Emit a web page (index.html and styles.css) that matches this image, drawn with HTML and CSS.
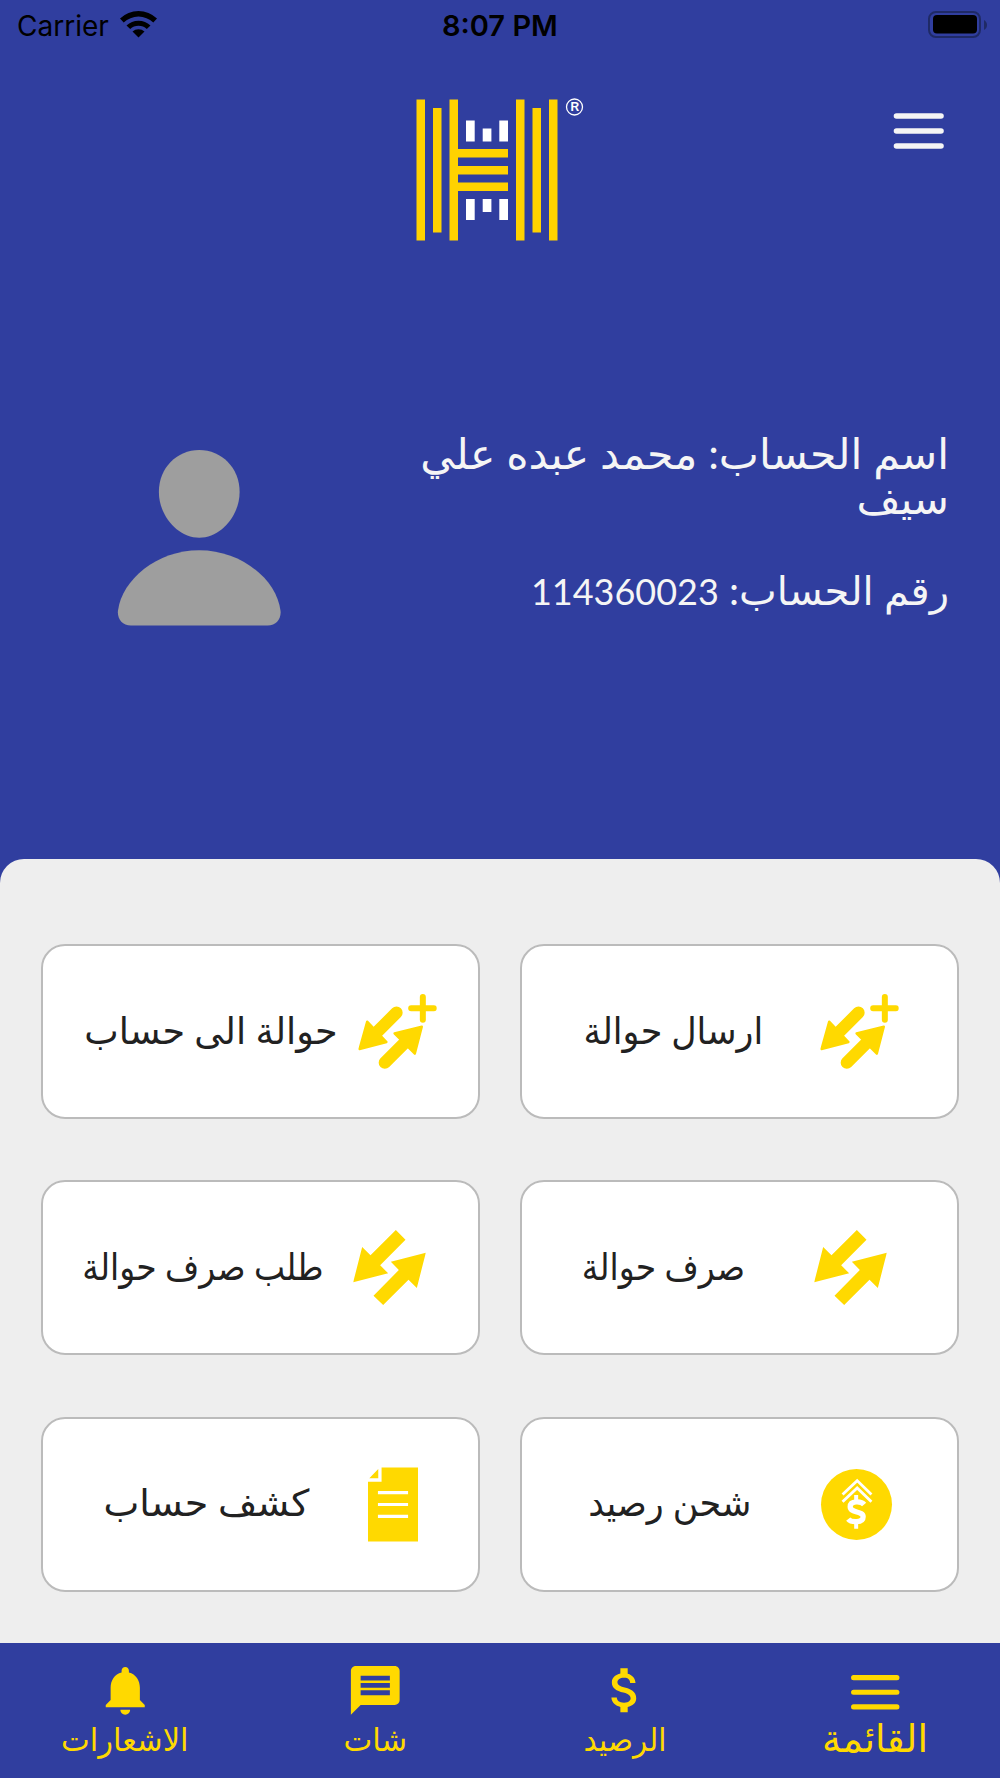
FILE: index.html
```
<!DOCTYPE html>
<html lang="ar" dir="rtl">
<head>
    <meta charset="UTF-8">
    <meta name="viewport" content="width=device-width, initial-scale=1.0">
    <title>الرئيسية</title>
    <link rel="stylesheet" href="styles.css">
</head>
<body>
    <div class="status-bar" dir="ltr">
        <div class="carrier">
            <span>Carrier</span>
            <svg class="wifi" viewBox="0 0 37 28">
                <path d="M18.500 27.500L12.500 21.500a9 9 0 0 1 12 0z"/>
                <path d="M6.500 15.500a17.500 17.500 0 0 1 24 0l-3.700 3.600a12 12 0 0 0 -16.600 0z"/>
                <path d="M0 8.500a26.500 26.500 0 0 1 37 0l-3.700 4a21.500 21.500 0 0 0 -29.600 0z"/>
            </svg>
        </div>
        <span class="time">8:07 PM</span>
        <svg class="battery" viewBox="0 0 60 28">
            <rect x="1" y="1" width="51" height="25" rx="7" fill="none" stroke="#1f2a66" stroke-width="2"/>
            <rect x="5" y="4" width="44" height="18.500" rx="4"/>
            <path d="M56 9c4 2 4 8 0 10z" fill="#1f2a66"/>
        </svg>
    </div>

    <header class="header">
        <svg class="logo" viewBox="0 0 170 144">
            <g fill="#ffd200">
                <rect x="0.500" y="1.500" width="8.500" height="141"/>
                <rect x="17" y="10" width="8.500" height="124.500"/>
                <rect x="33.500" y="1.500" width="8.500" height="141"/>
                <rect x="100" y="1.500" width="8.500" height="141"/>
                <rect x="116.500" y="10" width="8.500" height="124.500"/>
                <rect x="133" y="1.500" width="8.500" height="141"/>
                <rect x="42" y="51" width="50" height="8.500"/>
                <rect x="42" y="68" width="50" height="8.500"/>
                <rect x="42" y="84.500" width="50" height="8.500"/>
            </g>
            <g fill="#fff">
                <rect x="50" y="22.500" width="8.700" height="21"/>
                <rect x="66.700" y="30.500" width="8.700" height="13"/>
                <rect x="83.300" y="22.500" width="8.700" height="21"/>
                <rect x="50" y="101" width="8.700" height="21"/>
                <rect x="66.700" y="101" width="8.700" height="13"/>
                <rect x="83.300" y="101" width="8.700" height="21"/>
            </g>
            <circle cx="158.500" cy="9" r="8" fill="none" stroke="#fff" stroke-width="1.300"/>
            <text class="reg" x="158.900" y="13.200" text-anchor="middle">R</text>
        </svg>
        <svg class="menu-btn" viewBox="0 0 50 38">
            <path d="M2.500 4H47M2.500 19H47M2.500 34H47" stroke="#f5f5f5" stroke-width="5.600" stroke-linecap="round"/>
        </svg>
    </header>

    <section class="profile">
        <div class="account">
            <p class="account-name">اسم الحساب: محمد عبده علي سيف</p>
            <p class="account-number">رقم الحساب: <span class="digits">114360023</span></p>
        </div>
        <svg class="avatar" viewBox="0 0 163 176">
            <path d="M81.500 0C104 0 122 18 122 42C122 66 103 88 81.500 88C60 88 41 66 41 42C41 18 59 0 81.500 0z"/>
            <path d="M81.500 100.500C124 100.500 159 130 163 161C164 169 159 176 150 176H13C4 176 -1 169 0 161C4 130 39 100.500 81.500 100.500z"/>
        </svg>
    </section>

    <main class="panel">
        <a class="card send">
            <svg class="card-icon" viewBox="0 0 236 225"><use href="#transfer-plus"/></svg>
            <span class="label">ارسال حوالة</span>
        </a>
        <a class="card to-account">
            <svg class="card-icon" viewBox="0 0 236 225"><use href="#transfer-plus"/></svg>
            <span class="label">حوالة الى حساب</span>
        </a>
        <a class="card cash">
            <svg class="card-icon" viewBox="0 0 218 225"><use href="#transfer"/></svg>
            <span class="label">صرف حوالة</span>
        </a>
        <a class="card cash-request">
            <svg class="card-icon" viewBox="0 0 218 225"><use href="#transfer"/></svg>
            <span class="label">طلب صرف حوالة</span>
        </a>
        <a class="card topup">
            <svg class="card-icon" viewBox="0 0 214 214">
                <circle cx="107" cy="107" r="107" fill="#ffd900"/>
                <g fill="none" stroke="#fff">
                    <path d="M65 77L109 35L152 77M65 99L109 57L152 99" stroke-width="8.500"/>
                    <path d="M130 107C122 97 88 94 88 114C88 134 127 125 127 144C127 164 90 161 82 151" stroke-width="16"/>
                    <path d="M106 78V96M106 162V180" stroke-width="12"/>
                </g>
            </svg>
            <span class="label">شحن رصيد</span>
        </a>
        <a class="card statement">
            <svg class="card-icon" viewBox="0 0 151 224">
                <path d="M41 0H151V224H0V43H41zM31 5V33H4z" fill="#ffd900"/>
                <path d="M30 76H121M30 112H121M30 148H121" stroke="#fff" stroke-width="9.500"/>
            </svg>
            <span class="label">كشف حساب</span>
        </a>
    </main>

    <nav class="tabs">
        <a class="tab active">
            <svg class="tab-icon" viewBox="0 0 58 58">
                <path d="M7.500 16.500H50.500M7.500 31H50.500M7.500 45.500H50.500" stroke="#ffd900" stroke-width="5" stroke-linecap="round"/>
            </svg>
            <span class="label">القائمة</span>
        </a>
        <a class="tab balance">
            <svg class="tab-icon" viewBox="0 0 24 24">
                <path d="M11.800 10.900c-2.270-.59-3-1.200-3-2.150 0-1.090 1.010-1.850 2.700-1.850 1.780 0 2.440.85 2.500 2.100h2.210c-.07-1.720-1.120-3.300-3.210-3.810V3h-3v2.160c-1.940.42-3.500 1.680-3.500 3.610 0 2.310 1.910 3.460 4.700 4.130 2.500.6 3 1.480 3 2.410 0 .69-.49 1.790-2.700 1.790-2.060 0-2.870-.92-2.980-2.100h-2.200c.12 2.190 1.760 3.420 3.680 3.830V21h3v-2.150c1.950-.37 3.500-1.500 3.500-3.550 0-2.840-2.430-3.810-4.700-4.400z"/>
            </svg>
            <span class="label">الرصيد</span>
        </a>
        <a class="tab chat">
            <svg class="tab-icon" viewBox="0 0 24 24">
                <path d="M20 2H4c-1.100 0-1.990.9-1.990 2L2 22l4-4h14c1.100 0 2-.9 2-2V4c0-1.100-.9-2-2-2zm-2 12H6v-2h12v2zm0-3H6V9h12v2zm0-3H6V6h12v2z"/>
            </svg>
            <span class="label">شات</span>
        </a>
        <a class="tab alerts">
            <svg class="tab-icon" viewBox="0 0 24 24">
                <path d="M12 22c1.100 0 2-.9 2-2h-4c0 1.100.9 2 2 2zM18 16v-5c0-3.070-1.640-5.640-4.500-6.320V4c0-.83-.67-1.500-1.500-1.500s-1.500.67-1.500 1.500v.68C7.630 5.360 6 7.920 6 11v5l-2 2v1h16v-1l-2-2z"/>
            </svg>
            <span class="label">الاشعارات</span>
        </a>
    </nav>

    <svg class="sprite">
        <symbol id="transfer" viewBox="0 0 218 225">
            <path d="M128 0L157 29L81 106L105 130L0 157L27 51L52 76z" fill="#ffd900"/>
            <path d="M218 68L191 174L166 149L90 225L61 197L137 120L113 95z" fill="#ffd900"/>
        </symbol>
        <symbol id="transfer-plus" viewBox="0 0 236 225">
            <g fill="#ffd900" stroke="#ffd900" stroke-linecap="round" stroke-linejoin="round">
                <path d="M115 56L58 113M80 206L137 149" stroke-width="37"/>
                <path d="M4 165L27 83L85 144zM191 98L109 118L170 179z" stroke-width="7"/>
                <path d="M194 9V77M159 43H227" stroke-width="18"/>
            </g>
        </symbol>
    </svg>
</body>
</html>
```
FILE: styles.css
```
* {
    margin: 0;
    padding: 0;
    box-sizing: border-box;
}

body {
    font-family: Lato, 'DejaVu Sans', sans-serif;
    background: #303e9f;
    color: #f5f5f5;
    height: 1778px;
    display: flex;
    flex-direction: column;
    overflow: hidden;
}

svg {
    display: block;
    flex: none;
    overflow: visible;
}

.sprite {
    display: none;
}

.status-bar {
    height: 50px;
    padding: 0 12px 0 17px;
    display: flex;
    font-family: Inter, sans-serif;
    font-size: 28px;
    line-height: 52px;
    color: #000;
}

.carrier {
    width: 425px;
    display: flex;
    gap: 11px;
}

.time {
    flex: 1;
    font-size: 29px;
    font-weight: 600;
}

.wifi {
    width: 37px;
    height: 28px;
    margin-top: 10px;
}

.battery {
    width: 60px;
    height: 28px;
    margin-top: 11px;
}

.header {
    height: 380px;
    padding: 48px 56px 0 415.5px;
    display: flex;
    justify-content: space-between;
}

.logo {
    order: 2;
    width: 170px;
    height: 144px;
}

.reg {
    font: 700 12px 'Liberation Sans', sans-serif;
    fill: #fff;
}

.menu-btn {
    width: 50px;
    height: 38px;
    margin-top: 14px;
}

.profile {
    height: 429px;
    padding: 0 51px 0 117.5px;
    display: flex;
    justify-content: space-between;
}

.account {
    width: 550px;
    padding-top: 1px;
    line-height: 45px;
}

.account-name {
    font-size: 42px;
    transform: scaleX(1.014);
    transform-origin: right;
}

.account-number {
    margin-top: 47px;
    font-size: 40px;
}

.digits {
    font-size: 36px;
}

.avatar {
    width: 162.5px;
    height: 175.5px;
    margin-top: 19.5px;
    fill: #9e9e9e;
}

.panel {
    height: 784px;
    padding: 85px 41px 0;
    background: #eee;
    border-radius: 24px 24px 0 0;
    display: grid;
    grid-template-columns: 439px 439px;
    grid-auto-rows: 175px;
    gap: 61.3px 40px;
    align-content: start;
}

.card {
    background: #fff;
    border: 2px solid #bbb;
    border-radius: 24px;
    display: flex;
    align-items: center;
    color: #212121;
    font-size: 37px;
}

.label {
    white-space: nowrap;
}

.card .label {
    padding-bottom: 4px;
    transform-origin: right;
}

.card-icon {
    height: 75px;
}

.send {
    padding-right: 58px;
    gap: 57px;
}

.send .card-icon, .to-account .card-icon {
    width: 79px;
}

.send .label {
    transform: scaleX(.945);
}

.to-account {
    padding-right: 41px;
    gap: 20px;
}

.to-account .label {
    transform: scaleX(.987);
}

.cash {
    padding-right: 70px;
    gap: 69px;
}

.cash .card-icon, .cash-request .card-icon {
    width: 73px;
}

.cash .label, .cash-request .label {
    transform: scaleX(.892);
}

.cash-request {
    padding-right: 52px;
    gap: 29px;
}

.topup {
    padding-right: 65px;
    gap: 70px;
}

.topup .card-icon {
    width: 71px;
    height: 71px;
}

.topup .label {
    transform: scaleX(.947);
}

.statement {
    padding-right: 60px;
    gap: 59px;
}

.statement .card-icon {
    width: 50px;
}

.statement .label {
    transform: scaleX(1.028);
}

.tabs {
    height: 135px;
    display: grid;
    grid-template-columns: repeat(4, 1fr);
    color: #ffd900;
    fill: #ffd900;
}

.tab {
    padding-top: 17.5px;
    display: flex;
    flex-direction: column;
    align-items: center;
    font-size: 32px;
    line-height: 40px;
}

.tab-icon {
    width: 58.5px;
    height: 58.5px;
}

.active {
    font-size: 38px;
    line-height: 37px;
}

.balance .label {
    transform: scaleX(.92);
}

.chat .label, .alerts .label {
    transform: scaleX(.955);
}
```
